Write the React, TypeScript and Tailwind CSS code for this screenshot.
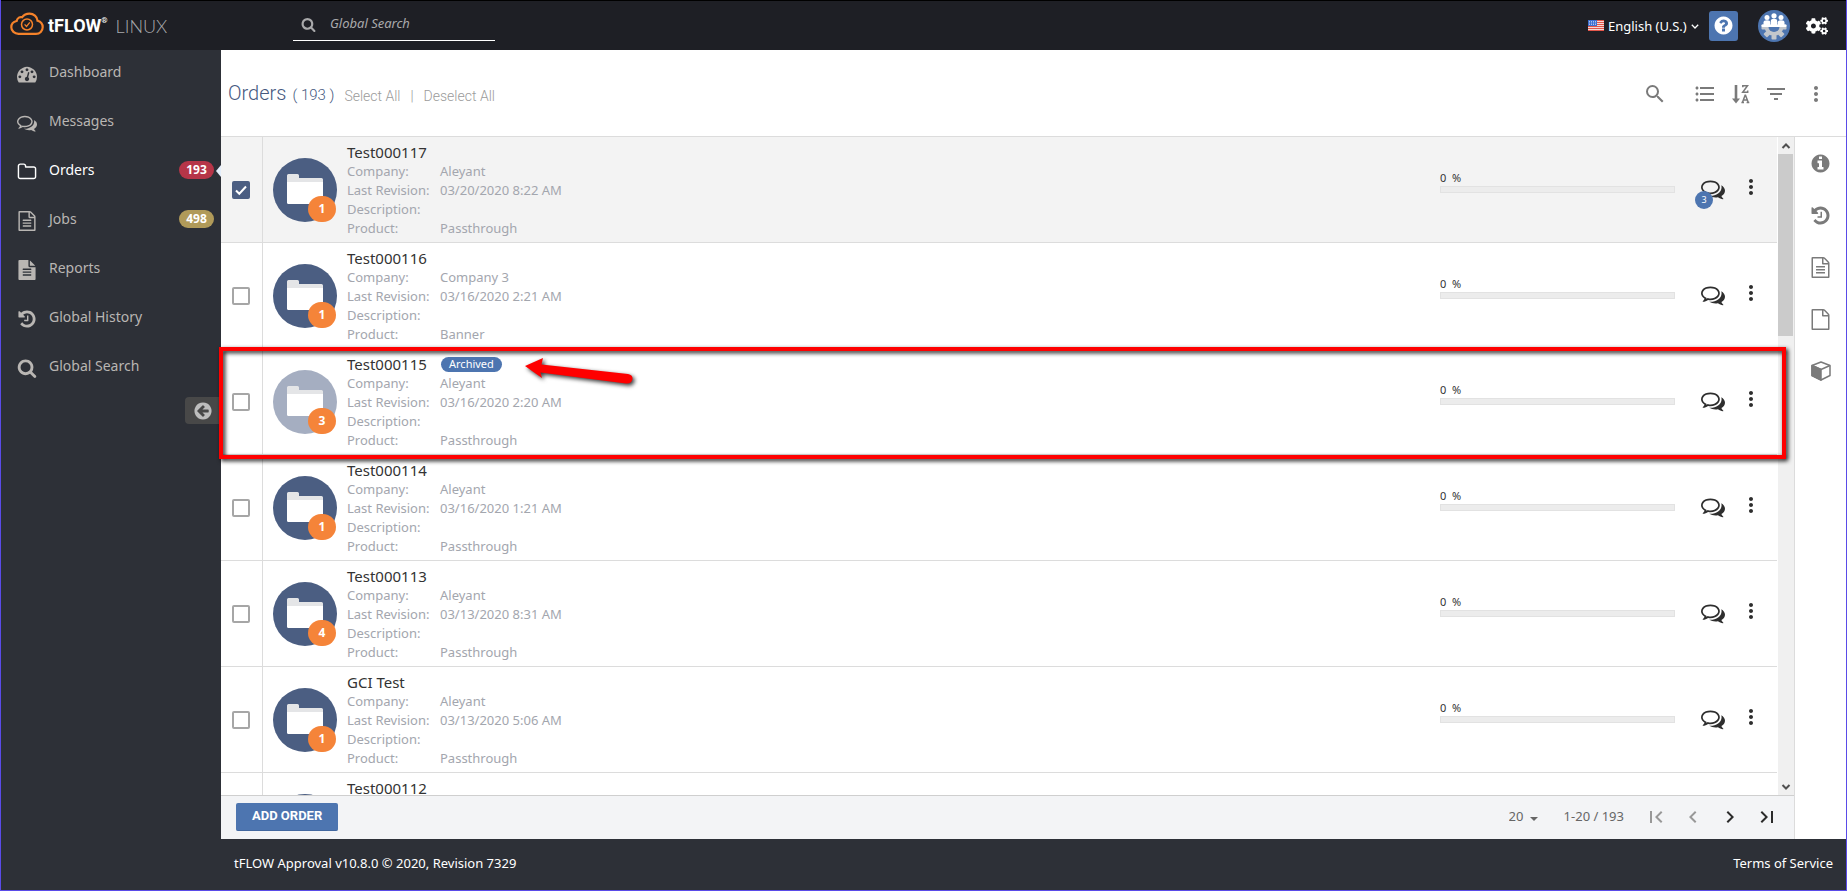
import { useState } from "react";
import type { ReactNode } from "react";
import {
  MdChevronLeft,
  MdChevronRight,
  MdFilterList,
  MdFirstPage,
  MdFormatListBulleted,
  MdLastPage,
  MdMoreVert,
  MdSearch,
} from "react-icons/md";
import { FaCogs } from "react-icons/fa";

const DISC =
  "M1664 896q0 209-103 385.5t-279.5 279.5-385.5 103-385.5-103-279.5-279.5-103-385.5 103-385.5 279.5-279.5 385.5-103 385.5 103 279.5 279.5 103 385.5z";
const SHEET =
  "M1596 380q28 28 48 76t20 88v1152q0 40-28 68t-68 28h-1344q-40 0-68-28t-28-68v-1600q0-40 28-68t68-28h896q40 0 88 20t76 48zm-444-244v376h376q-10-29-22-41l-313-313q-12-12-41-22zm384 1528v-1024h-416q-40 0-68-28t-28-68v-416h-768v1536h1280z";

const GLYPHS = {
  gauge:
    "M384 1152q0-53-37.5-90.5t-90.5-37.5-90.5 37.5-37.5 90.5 37.5 90.5 90.5 37.5 90.5-37.5 37.5-90.5zm192-448q0-53-37.5-90.5t-90.5-37.5-90.5 37.5-37.5 90.5 37.5 90.5 90.5 37.5 90.5-37.5 37.5-90.5zm428 481l101-382q6-26-7.5-48.5t-38.5-29.5-48 6.5-30 39.5l-101 382q-60 5-107 43.5t-63 98.5q-20 77 20 146t117 89 146-20 89-117q16-60-6-117t-72-91zm660-33q0-53-37.5-90.5t-90.5-37.5-90.5 37.5-37.5 90.5 37.5 90.5 90.5 37.5 90.5-37.5 37.5-90.5zm-640-640q0-53-37.5-90.5t-90.5-37.5-90.5 37.5-37.5 90.5 37.5 90.5 90.5 37.5 90.5-37.5 37.5-90.5zm448 192q0-53-37.5-90.5t-90.5-37.5-90.5 37.5-37.5 90.5 37.5 90.5 90.5 37.5 90.5-37.5 37.5-90.5zm320 448q0 261-141 483-19 29-54 29h-1402q-35 0-54-29-141-221-141-483 0-182 71-348t191-286 286-191 348-71 348 71 286 191 191 286 71 348z",
  comments:
    "M704 384q-153 0-286 52t-211.5 141-78.5 191q0 82 53 158t149 132l97 56-35 84q34-20 62-39l44-31 53 10q78 14 153 14 153 0 286-52t211.5-141 78.5-191-78.5-191-211.5-141-286-52zm0-128q191 0 353.5 68.5t256.5 186.5 94 257-94 257-256.5 186.5-353.5 68.5q-86 0-176-16-124 88-278 128-36 9-86 16h-3q-11 0-20.5-8t-11.5-21q-1-3-1-6.5t.5-6.5 2-6l2.5-5 3.5-5.5 4-5 4.5-5 4-4.5q5-6 23-25t26-29.5 22.5-29 25-38.5 20.5-44q-124-72-195-177t-71-224q0-139 94-257t256.5-186.5 353.5-68.5zm822 1169q10 24 20.5 44t25 38.5 22.5 29 26 29.5 23 25q1 1 4 4.5t4.5 5 4 5 3.5 5.5l2.5 5 2 6 .5 6.5-1 6.5q-3 14-13 22t-22 7q-50-7-86-16-154-40-278-128-90 16-176 16-271 0-472-132 58 4 88 4 161 0 309-45t264-129q125-92 192-212t67-254q0-77-23-152 129 71 204 178t75 230q0 120-71 224.5t-195 176.5z",
  folder:
    "M1600 1312v-704q0-40-28-68t-68-28h-704q-40 0-68-28t-28-68v-64q0-40-28-68t-68-28h-320q-40 0-68 28t-28 68v960q0 40 28 68t68 28h1216q40 0 68-28t28-68zm128-704v704q0 92-66 158t-158 66h-1216q-92 0-158-66t-66-158v-960q0-92 66-158t158-66h320q92 0 158 66t66 158v32h672q92 0 158 66t66 158z",
  sheet: SHEET,
  sheetText:
    SHEET +
    "m-1024-864q0-14 9-23t23-9h704q14 0 23 9t9 23v64q0 14-9 23t-23 9h-704q-14 0-23-9t-9-23v-64zm736 224q14 0 23 9t9 23v64q0 14-9 23t-23 9h-704q-14 0-23-9t-9-23v-64q0-14 9-23t23-9h704zm0 256q14 0 23 9t9 23v64q0 14-9 23t-23 9h-704q-14 0-23-9t-9-23v-64q0-14 9-23t23-9h704z",
  report:
    "M1596 476q14 14 28 36h-472v-472q22 14 36 28zm-476 164h544v1056q0 40-28 68t-68 28h-1344q-40 0-68-28t-28-68v-1600q0-40 28-68t68-28h800v544q0 40 28 68t68 28zm160 736v-64q0-14-9-23t-23-9h-704q-14 0-23 9t-9 23v64q0 14 9 23t23 9h704q14 0 23-9t9-23zm0-256v-64q0-14-9-23t-23-9h-704q-14 0-23 9t-9 23v64q0 14 9 23t23 9h704q14 0 23-9t9-23zm0-256v-64q0-14-9-23t-23-9h-704q-14 0-23 9t-9 23v64q0 14 9 23t23 9h704q14 0 23-9t9-23z",
  history:
    "M1664 896q0 156-61 298t-164 245-245 164-298 61q-172 0-327-72.5t-264-204.5q-7-10-6.5-22.5t8.5-20.5l137-138q10-9 25-9 16 2 23 12 73 95 179 147t225 52q104 0 198.5-40.5t163.5-109.5 109.5-163.5 40.5-198.5-40.5-198.5-109.5-163.5-163.5-109.5-198.5-40.5q-98 0-188 35.5t-160 101.5l137 138q31 30 14 69-17 40-59 40h-448q-26 0-45-19t-19-45v-448q0-42 40-59 39-17 69 14l130 129q107-101 244.5-156.5t284.5-55.5q156 0 298 61t245 164 164 245 61 298zm-640-288v448q0 14-9 23t-23 9h-320q-14 0-23-9t-9-23v-64q0-14 9-23t23-9h224v-352q0-14 9-23t23-9h64q14 0 23 9t9 23z",
  search:
    "M1216 832q0-185-131.5-316.5t-316.5-131.5-316.5 131.5-131.5 316.5 131.5 316.5 316.5 131.5 316.5-131.5 131.5-316.5zm512 832q0 52-38 90t-90 38q-54 0-90-38l-343-342q-179 124-399 124-143 0-273.5-55.5t-225-150-150-225-55.5-273.5 55.5-273.5 150-225 225-150 273.5-55.5 273.5 55.5 225 150 150 225 55.5 273.5q0 220-124 399l343 343q37 37 37 90z",
  back:
    "M1408 960v-128q0-26-19-45t-45-19h-502l189-189q19-19 19-45t-19-45l-91-91q-18-18-45-18t-45 18l-362 362-91 91q-18 18-18 45t18 45l91 91 362 362q18 18 45 18t45-18l91-91q18-18 18-45t-18-45l-189-189h502q26 0 45-19t19-45z" +
    DISC,
  question:
    "M1024 1376v-192q0-14-9-23t-23-9h-192q-14 0-23 9t-9 23v192q0 14 9 23t23 9h192q14 0 23-9t9-23zm256-672q0-88-55.5-163t-138.5-116-170-41q-243 0-371 213-15 24 8 42l132 100q7 6 19 6 16 0 25-12 53-68 86-92 34-24 86-24 48 0 85.5 26t37.5 59q0 38-20 61t-68 45q-63 28-115.5 86.5t-52.5 125.5v36q0 14 9 23t23 9h192q14 0 23-9t9-23q0-19 21.5-49.5t54.5-49.5q32-18 49-28.5t46-35 44.5-48 28-60.5 12.5-81z" +
    DISC,
  info:
    "M1152 1376v-160q0-14-9-23t-23-9h-96v-512q0-14-9-23t-23-9h-320q-14 0-23 9t-9 23v160q0 14 9 23t23 9h96v320h-96q-14 0-23 9t-9 23v160q0 14 9 23t23 9h448q14 0 23-9t9-23zm-128-896v-160q0-14-9-23t-23-9h-192q-14 0-23 9t-9 23v160q0 14 9 23t23 9h192q14 0 23-9t9-23z" +
    DISC,
};

type GlyphName = keyof typeof GLYPHS;

function Glyph({ name, className }: { name: GlyphName; className: string }) {
  return (
    <svg viewBox="0 0 1792 1792" fill="currentColor" fillRule="evenodd" className={className} aria-hidden="true">
      <path d={GLYPHS[name]} />
    </svg>
  );
}

function CloudLogo() {
  return (
    <svg viewBox="0 0 34 24" className="h-6 w-[34px]" fill="none" stroke="#f5822a" aria-hidden="true">
      <path
        d="M8.5 21.8C4.500 21.8 1.300 19 1.300 15.300C1.300 12 3.400 9.600 6.600 9C7.400 5.600 10 4.600 12.200 5.200C14 2.600 16.500 1.600 19.500 1.600C23.600 1.600 27.200 4.600 27.600 8.800C30.600 9.600 32.700 12 32.700 15.200C32.700 19 29.800 21.800 26 21.800Z"
        strokeWidth="2.200"
      />
      <circle cx="17" cy="12.500" r="5.500" strokeWidth="1.500" />
      <path d="M14.600 12.400L16.500 14.500L19.800 10.400" strokeWidth="1.300" />
    </svg>
  );
}

function UsFlag() {
  return (
    <svg viewBox="0 0 16 11" className="h-[11px] w-4" aria-hidden="true">
      <rect width="16" height="11" fill="#f5d9d6" />
      <path d="M0 .5H16M0 2.500H16M0 4.500H16M0 6.500H16M0 8.500H16M0 10.500H16" stroke="#e2564a" />
      <rect width="9" height="6" fill="#3d6fd0" />
      <path d="M1 1.500H8M1 3H8M1 4.500H8" stroke="#dfe8fa" strokeWidth=".7" strokeDasharray="1 1" />
    </svg>
  );
}

const TEETH = [0, 45, 90, 135, 180];

function TeamAvatar() {
  return (
    <svg viewBox="0 0 32 32" className="size-8" aria-hidden="true">
      <circle cx="16" cy="16" r="16" fill="#4d75b0" />
      <g fill="#c3c7cc">
        {TEETH.map((angle) => (
          <rect key={angle} x="24" y="14.500" width="4.500" height="5" rx=".8" transform={"rotate(" + angle + " 16 17)"} />
        ))}
        <path d="M6.500 16.500H25.500A9.500 9.500 0 0 1 6.500 16.500Z" />
      </g>
      <path d="M10.500 17H21.500A5.500 5 0 0 1 10.500 17Z" fill="#4d75b0" />
      <g fill="#fff">
        <circle cx="9" cy="7.600" r="2.500" />
        <circle cx="16" cy="5.800" r="2.600" />
        <circle cx="23" cy="7.600" r="2.500" />
        <path d="M5.500 15V12.500Q5.500 10.300 9 10.300Q12.300 10.300 12.300 12.500V15Z" />
        <path d="M12.800 15V11Q12.800 8.800 16 8.800Q19.200 8.800 19.200 11V15Z" />
        <path d="M19.700 15V12.500Q19.700 10.300 23 10.300Q26.500 10.300 26.500 12.500V15Z" />
        <rect x="3.500" y="14.500" width="25" height="2.600" rx="1" />
      </g>
    </svg>
  );
}

function SortIcon() {
  return (
    <svg viewBox="0 0 18 20" className="h-5 w-[18px]" fill="none" stroke="currentColor" aria-hidden="true">
      <path d="M4 1V15" strokeWidth="2.600" />
      <path d="M0 14.500H8L4 19.500Z" fill="currentColor" stroke="none" />
      <path d="M10.800 3.300V1.700H15.500L10.700 8.200H15.700V6.500" strokeWidth="1.500" />
      <path d="M10.500 18.300L13.100 11.300H13.500L16.200 18.300M11.700 15.900H15M9.400 18.400H12M14.600 18.400H17.300" strokeWidth="1.500" />
    </svg>
  );
}

function CubeIcon() {
  return (
    <svg viewBox="0 0 20 20" className="size-5" stroke="currentColor" strokeWidth="1.500" strokeLinejoin="round" aria-hidden="true">
      <path d="M10 1L19 4.500V14.500L10 19L1 14.500V4.500Z" fill="none" />
      <path d="M1 4.500L10 8.500L19 4.500" fill="none" />
      <path d="M1 4.500L10 8.500V19L1 14.500Z" fill="currentColor" />
    </svg>
  );
}

function FolderArt() {
  return (
    <svg viewBox="0 0 36 30" className="h-[30px] w-9" aria-hidden="true">
      <path d="M0 1.500Q0 0 1.500 0H10.500Q12 0 12 1.500V4H34.500Q36 4 36 5.500V10H0Z" fill="#e4e5e7" />
      <path d="M0 8H36V28.500Q36 30 34.500 30H1.500Q0 30 0 28.500Z" fill="#fff" />
    </svg>
  );
}

type NavItem = { label: string; icon: GlyphName; count?: number; countClass?: string; active?: boolean };

const NAV: NavItem[] = [
  { label: "Dashboard", icon: "gauge" },
  { label: "Messages", icon: "comments" },
  { label: "Orders", icon: "folder", count: 193, countClass: "bg-[#b63548]", active: true },
  { label: "Jobs", icon: "sheetText", count: 498, countClass: "bg-[#b09a59]" },
  { label: "Reports", icon: "report" },
  { label: "Global History", icon: "history" },
  { label: "Global Search", icon: "search" },
];

type Order = {
  name: string;
  company?: string;
  revised?: string;
  product?: string;
  items: number;
  archived?: boolean;
  messages?: number;
};

const ORDERS: Order[] = [
  { name: "Test000117", company: "Aleyant", revised: "03/20/2020 8:22 AM", product: "Passthrough", items: 1, messages: 3 },
  { name: "Test000116", company: "Company 3", revised: "03/16/2020 2:21 AM", product: "Banner", items: 1 },
  { name: "Test000115", company: "Aleyant", revised: "03/16/2020 2:20 AM", product: "Passthrough", items: 3, archived: true },
  { name: "Test000114", company: "Aleyant", revised: "03/16/2020 1:21 AM", product: "Passthrough", items: 1 },
  { name: "Test000113", company: "Aleyant", revised: "03/13/2020 8:31 AM", product: "Passthrough", items: 4 },
  { name: "GCI Test", company: "Aleyant", revised: "03/13/2020 5:06 AM", product: "Passthrough", items: 1 },
  { name: "Test000112", items: 1 },
];

function TopBar() {
  return (
    <header className="flex h-[50px] shrink-0 items-center border-t border-black bg-[#1e1f25] pr-[18px] pl-[9px] text-white">
      <a href="#home" className="flex w-[283px] items-center pb-1">
        <CloudLogo />
        <span className="mt-1 ml-1 flex items-start font-['Roboto',sans-serif] text-lg leading-5 font-bold">
          tFLOW<span className="text-[8px] leading-[10px]">®</span>
        </span>
        <span className="mt-1 ml-2 font-['Lato',sans-serif] text-lg leading-5 font-light text-[#a9aaad]">LINUX</span>
      </a>
      <label className="flex h-[30px] w-[202px] items-center border-b border-white pr-2 pb-0.5 pl-2 text-[#a9a9ab]">
        <Glyph name="search" className="mr-3.5 size-[15px]" />
        <input
          type="search"
          aria-label="Global Search"
          placeholder="Global Search"
          className="min-w-0 flex-1 bg-transparent text-[13px] italic outline-none placeholder:text-[#a9a9ab]"
        />
      </label>
      <div className="ml-auto flex items-center">
        <UsFlag />
        <select
          aria-label="Language"
          defaultValue="en"
          className="mt-0.5 ml-1 cursor-pointer appearance-none bg-transparent text-[13px] outline-none"
        >
          <option value="en">English (U.S.)</option>
        </select>
        <svg viewBox="0 0 8 5" className="mt-0.5 ml-1 h-[5px] w-2" fill="none" stroke="currentColor" strokeWidth="1.300" aria-hidden="true">
          <path d="M.8 .8L4 4L7.200 .8" />
        </svg>
        <button type="button" aria-label="Help" className="ml-2.5 flex h-[30px] w-[29px] items-center justify-center rounded-[3px] bg-[#4d75b0]">
          <Glyph name="question" className="size-[21px]" />
        </button>
        <button type="button" aria-label="Account" className="ml-5">
          <TeamAvatar />
        </button>
        <button type="button" aria-label="Settings" className="ml-4">
          <FaCogs className="size-[22px]" />
        </button>
      </div>
    </header>
  );
}

function Sidebar() {
  return (
    <aside className="flex w-[220px] shrink-0 flex-col bg-[#2d3037]">
      <nav>
        <ul>
          {NAV.map((item) => (
            <li key={item.label}>
              <a
                href={"#" + item.label.toLowerCase().replace(" ", "-")}
                className={
                  "relative flex h-[49px] items-center pr-[7px] pb-1.5 pl-4 text-sm " +
                  (item.active ? "text-white" : "text-[#b9b6b3]")
                }
              >
                <Glyph name={item.icon} className="mt-1 mr-3 size-5" />
                {item.label}
                {item.count !== undefined && (
                  <span
                    className={
                      "ml-auto flex h-[18px] w-[35px] items-center justify-center rounded-full text-xs font-bold text-white " +
                      item.countClass
                    }
                  >
                    {item.count}
                  </span>
                )}
                {item.active && (
                  <span className="absolute top-[17px] right-0 border-y-[6px] border-r-[5px] border-y-transparent border-r-[#e4eefb]" />
                )}
              </a>
            </li>
          ))}
        </ul>
      </nav>
      <button
        type="button"
        aria-label="Collapse menu"
        className="mt-1 flex h-[27px] w-9 items-center self-end rounded-l bg-[#484848] pl-2 text-[#bdbdbd]"
      >
        <Glyph name="back" className="size-5" />
      </button>
    </aside>
  );
}

function ToolButton({ label, className, children }: { label: string; className?: string; children: ReactNode }) {
  return (
    <button type="button" aria-label={label} className={className}>
      {children}
    </button>
  );
}

function OrdersHeader() {
  return (
    <div className="flex h-[86px] shrink-0 items-center bg-white pr-[18px] pl-[7px] font-['Roboto',sans-serif]">
      <h1 className="flex items-baseline text-xl font-light text-[#46597f]">
        Orders
        <span className="ml-1.5 text-[15px] whitespace-pre">( 193 )</span>
      </h1>
      <div className="mt-1.5 ml-2.5 flex gap-2.5 text-sm font-light text-[#9b9b9b]">
        <button type="button">Select All</button>
        <span>|</span>
        <button type="button">Deselect All</button>
      </div>
      <div className="mt-0.5 ml-auto flex items-center text-[#7a7a7a]">
        <ToolButton label="Search orders" className="mr-[26px]">
          <MdSearch className="size-6" />
        </ToolButton>
        <ToolButton label="List view" className="mr-[15px]">
          <MdFormatListBulleted className="size-6" />
        </ToolButton>
        <ToolButton label="Sort" className="mr-3.5">
          <SortIcon />
        </ToolButton>
        <ToolButton label="Filter" className="mr-4">
          <MdFilterList className="size-6" />
        </ToolButton>
        <ToolButton label="More">
          <MdMoreVert className="size-6" />
        </ToolButton>
      </div>
    </div>
  );
}

function OrderRow({ order, checked, onToggle }: { order: Order; checked: boolean; onToggle: () => void }) {
  const details = [
    ["Company:", order.company],
    ["Last Revision:", order.revised],
    ["Description:", ""],
    ["Product:", order.product],
  ];
  return (
    <li className={"flex h-[106px] border-b border-[#dcdcdc] " + (checked ? "bg-[#f3f3f3]" : "bg-white")}>
      <div className="flex w-[42px] shrink-0 items-center justify-center border-r border-[#dcdcdc] pt-px pr-0.5">
        <div className="relative flex">
          <input
            type="checkbox"
            aria-label={"Select " + order.name}
            checked={checked}
            onChange={onToggle}
            className="peer size-[18px] appearance-none rounded-[2px] border-2 border-[#a6a6a6] bg-white checked:border-[#4b5e82] checked:bg-[#4b5e82]"
          />
          <svg
            viewBox="0 0 18 18"
            className="pointer-events-none absolute inset-0 hidden size-[18px] peer-checked:block"
            fill="none"
            stroke="#fff"
            strokeWidth="2"
            aria-hidden="true"
          >
            <path d="M4 9.500L7.300 12.800L14 5.500" />
          </svg>
        </div>
      </div>
      <div className="flex items-center pl-2.5">
        <div className="relative size-16">
          <div
            className={
              "flex size-16 items-center justify-center rounded-full pb-0.5 " +
              (order.archived ? "bg-[#a5aec1]" : "bg-[#4b5e82]")
            }
          >
            <FolderArt />
          </div>
          {order.company && (
            <span className="absolute right-px bottom-0 flex h-[26px] w-7 items-center justify-center rounded-full bg-[#f58439] text-xs font-bold text-white">
              {order.items}
            </span>
          )}
        </div>
      </div>
      <div className="min-w-0 flex-1 pt-1 pl-2.5">
        <div className="flex h-[22px] items-center">
          <h2 className="min-w-[94px] text-[15px] text-[#333]">{order.name}</h2>
          {order.archived && (
            <span className="flex h-[15px] items-center rounded-full bg-[#4d75b0] px-2 text-[11px] text-white">Archived</span>
          )}
        </div>
        {order.company && (
          <dl className="-mt-px text-[13px] leading-[19px] text-[#a3a6ae]">
            {details.map(([term, value]) => (
              <div key={term} className="flex">
                <dt className="w-[93px] shrink-0">{term}</dt>
                <dd>{value}</dd>
              </div>
            ))}
          </dl>
        )}
      </div>
      {order.company && (
        <>
          <div className="w-[235px] shrink-0 pt-[33px] text-[#333]">
            <div className="text-[11px] leading-[15px] whitespace-pre">{"0  %"}</div>
            <div
              role="progressbar"
              aria-label={order.name + " progress"}
              aria-valuenow={0}
              className="mt-px h-[7px] border border-[#e2e2e2] bg-[#ececec]"
            />
          </div>
          <div className="flex items-center pr-3.5 pb-0.5 pl-[26px] text-[#2e2e2e]">
            <button type="button" aria-label="Messages" className="relative">
              <Glyph name="comments" className="size-6" />
              {order.messages && (
                <span className="absolute top-3.5 -left-1.5 flex size-[18px] items-center justify-center rounded-full bg-[#4d75b0] text-[9px] text-white">
                  {order.messages}
                </span>
              )}
            </button>
            <button type="button" aria-label="Order actions" className="mb-1 ml-3.5">
              <MdMoreVert className="size-6" />
            </button>
          </div>
        </>
      )}
    </li>
  );
}

function ScrollArrow({ flip }: { flip?: boolean }) {
  return (
    <svg viewBox="0 0 16 17" className="h-[17px] w-4 shrink-0" fill="none" stroke="#505050" strokeWidth="2" aria-hidden="true">
      <path d={flip ? "M4.500 7L8 10.500L11.500 7" : "M4.500 11L8 7.500L11.500 11"} />
    </svg>
  );
}

function Annotation() {
  return (
    <>
      <div className="pointer-events-none absolute top-[210px] right-2 -left-0.5 z-10 h-28 border-4 border-[#fe0000] drop-shadow-[2px_2px_2px_rgba(0,0,0,0.9)]" />
      <svg
        viewBox="0 0 112 32"
        className="pointer-events-none absolute top-[220px] left-[302px] z-10 h-8 w-28 drop-shadow-[2px_2px_2px_rgba(0,0,0,0.8)]"
        fill="#fe0000"
        aria-hidden="true"
      >
        <path d="M2 9L20 1L18.500 7.500L105 17Q110 18 109.500 22Q108.500 27 103 26.500L17.500 15.500L19 21Z" />
      </svg>
    </>
  );
}

function Pager() {
  return (
    <div className="flex h-11 shrink-0 items-center border-t border-[#cfcfcf] bg-[#f3f4f6] pr-[15px] pb-0.5 pl-[15px]">
      <button
        type="button"
        className="h-7 rounded-[2px] border-b border-[#41679f] bg-[#4d75b0] px-4 font-['Roboto',sans-serif] text-[13px] font-bold text-white"
      >
        ADD ORDER
      </button>
      <div className="ml-auto flex items-center text-[13px] text-[#666]">
        <select aria-label="Orders per page" defaultValue="20" className="appearance-none bg-transparent outline-none">
          <option>20</option>
        </select>
        <svg viewBox="0 0 8 4" className="mt-1 mr-[26px] ml-1.5 h-1 w-2" fill="currentColor" aria-hidden="true">
          <path d="M0 0H8L4 4Z" />
        </svg>
        <span>1-20 / 193</span>
        <div className="ml-5 flex gap-[13px] text-[#2b2b2b]">
          <button type="button" aria-label="First page" className="text-[#989898]">
            <MdFirstPage className="size-6" />
          </button>
          <button type="button" aria-label="Previous page" className="text-[#989898]">
            <MdChevronLeft className="size-6" />
          </button>
          <button type="button" aria-label="Next page">
            <MdChevronRight className="size-6" />
          </button>
          <button type="button" aria-label="Last page">
            <MdLastPage className="size-6" />
          </button>
        </div>
      </div>
    </div>
  );
}

function DetailRail() {
  const items: [string, ReactNode][] = [
    ["Info", <Glyph name="info" className="size-[21px]" />],
    ["History", <Glyph name="history" className="size-[21px]" />],
    ["Jobs", <Glyph name="sheetText" className="size-[21px]" />],
    ["Files", <Glyph name="sheet" className="size-[21px]" />],
    ["Product", <CubeIcon />],
  ];
  return (
    <div className="flex w-[52px] shrink-0 flex-col items-center border-l border-[#dcdcdc] bg-white text-[#7a7a7a]">
      {items.map(([label, icon]) => (
        <button key={label} type="button" aria-label={label} className="flex h-[52px] w-full items-center justify-center">
          {icon}
        </button>
      ))}
    </div>
  );
}

export default function App() {
  const [selected, setSelected] = useState<string[]>(["Test000117"]);
  const toggle = (name: string) =>
    setSelected((current) => (current.includes(name) ? current.filter((n) => n !== name) : [...current, name]));

  return (
    <div className="flex h-screen flex-col border-x border-b border-[#5a4be8] bg-[#2d3037] font-['Noto_Sans',sans-serif]">
      <TopBar />
      <div className="flex min-h-0 flex-1">
        <Sidebar />
        <div className="flex min-w-0 flex-1 flex-col">
          <OrdersHeader />
          <div className="flex min-h-0 flex-1 border-t border-[#dcdcdc]">
            <main className="flex min-w-0 flex-1 flex-col">
              <div className="relative flex min-h-0 flex-1 bg-white">
                <ul className="min-w-0 flex-1 overflow-y-auto [scrollbar-width:none]">
                  {ORDERS.map((order) => (
                    <OrderRow
                      key={order.name}
                      order={order}
                      checked={selected.includes(order.name)}
                      onToggle={() => toggle(order.name)}
                    />
                  ))}
                </ul>
                <div className="ml-px flex w-4 shrink-0 flex-col bg-[#f0f0f0]">
                  <ScrollArrow />
                  <div className="mr-px h-[182px] bg-[#cbcbcb]" />
                  <div className="flex-1" />
                  <ScrollArrow flip />
                </div>
                <Annotation />
              </div>
              <Pager />
            </main>
            <DetailRail />
          </div>
          <footer className="flex h-[51px] shrink-0 items-center justify-between px-[13px] pb-0.5 text-[13px] text-white">
            <span>tFLOW Approval v10.8.0 © 2020, Revision 7329</span>
            <a href="#terms">Terms of Service</a>
          </footer>
        </div>
      </div>
    </div>
  );
}
